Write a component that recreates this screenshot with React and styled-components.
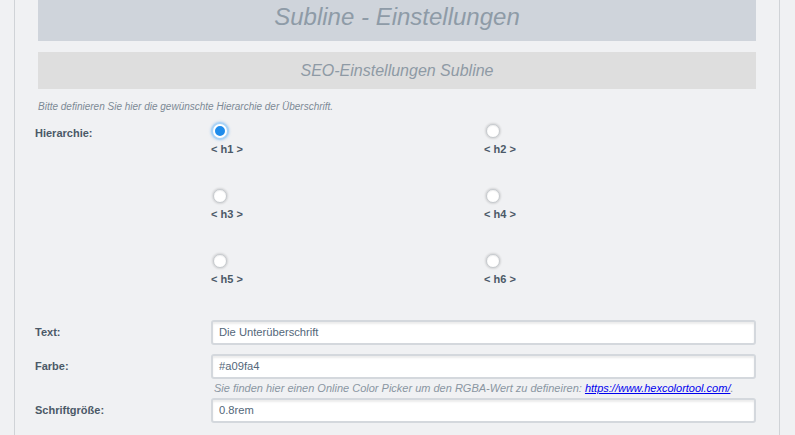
import React from 'react';
import styled, { createGlobalStyle } from 'styled-components';

const GlobalStyle = createGlobalStyle`
  html, body {
    margin: 0;
    padding: 0;
    background: #f0f1f3;
    font-family: "Liberation Sans", Arial, sans-serif;
  }
`;

const Page = styled.div`
  height: 435px;
  overflow: hidden;
`;

const Panel = styled.div`
  margin-left: 14px;
  width: 766px;
  min-height: 435px;
  border-left: 1px solid #d0d3d7;
  border-right: 1px solid #d0d3d7;
  padding: 0 23px;
  box-sizing: border-box;
`;

const TitleBar = styled.div`
  height: 41px;
  background: #cfd4db;
  text-align: center;
  font-size: 24px;
  font-style: italic;
  line-height: 33px;
  color: #8e9ba7;
`;

const SubBar = styled.div`
  margin-top: 11px;
  height: 37px;
  background: #dedede;
  text-align: center;
  font-size: 16px;
  font-style: italic;
  line-height: 37px;
  color: #8e9aa5;
`;

const Note = styled.div`
  margin-top: 12px;
  font-size: 10px;
  line-height: 12px;
  font-style: italic;
  color: #7c8995;
`;

const FormRow = styled.div`
  display: grid;
  grid-template-columns: 176px 1fr;
  align-items: ${p => (p.$top ? 'start' : 'center')};
  margin-left: -3px;
  margin-top: ${p => p.$mt || 0}px;
`;

const Label = styled.div`
  font-size: 11px;
  font-weight: bold;
  color: #4b5967;
  line-height: 13px;
  padding-top: ${p => p.$pt || 0}px;
`;

const RadioGrid = styled.div`
  display: grid;
  grid-template-columns: 273px 273px;
  grid-auto-rows: 65px;
`;

const RadioCell = styled.label`
  display: flex;
  flex-direction: column;
  align-items: flex-start;
  padding-top: 1px;
`;

const Radio = styled.span`
  display: block;
  width: 14px;
  height: 14px;
  margin-left: 2px;
  border-radius: 50%;
  box-sizing: border-box;
  background: ${p => (p.$checked ? '#1f8ceb' : '#fff')};
  border: ${p => (p.$checked ? '2px solid #fff' : '1px solid #c6cace')};
  box-shadow: ${p =>
    p.$checked
      ? '0 0 0 2px #a9d3f6, 0 0 2px 3px rgba(120,180,240,0.35)'
      : '0 0 2px 1px rgba(0,0,0,0.12), inset 0 1px 1px rgba(0,0,0,0.06)'};
`;

const RadioText = styled.span`
  margin-top: 5px;
  font-size: 11px;
  font-weight: bold;
  line-height: 13px;
  color: #4b5967;
`;

const Input = styled.div`
  height: 25px;
  box-sizing: border-box;
  border: 2px solid #d4d8dd;
  border-radius: 3px;
  background: #fff;
  box-shadow: inset 0 2px 2px rgba(0, 0, 0, 0.08);
  padding-left: 6px;
  font-size: 11.2px;
  line-height: 21px;
  color: #53677a;
`;

const Help = styled.div`
  margin-top: 3px;
  padding-left: 3px;
  font-size: 11px;
  line-height: 13px;
  font-style: italic;
  color: #8a96a2;

  a {
    color: #0000ee;
    text-decoration: underline;
  }
`;

const levels = ['h1', 'h2', 'h3', 'h4', 'h5', 'h6'];

export default function App() {
  return (
    <Page>
      <GlobalStyle />
      <Panel>
        <TitleBar>Subline - Einstellungen</TitleBar>
        <SubBar>SEO-Einstellungen Subline</SubBar>
        <Note>Bitte definieren Sie hier die gewünschte Hierarchie der Überschrift.</Note>

        <FormRow $top $mt={10}>
          <Label $pt={4}>Hierarchie:</Label>
          <RadioGrid>
            {levels.map(l => (
              <RadioCell key={l}>
                <Radio $checked={l === 'h1'} />
                <RadioText>&lt; {l} &gt;</RadioText>
              </RadioCell>
            ))}
          </RadioGrid>
        </FormRow>

        <FormRow $mt={2}>
          <Label>Text:</Label>
          <Input>Die Unterüberschrift</Input>
        </FormRow>

        <FormRow $mt={9}>
          <Label>Farbe:</Label>
          <Input>#a09fa4</Input>
        </FormRow>
        <FormRow>
          <span />
          <Help>
            Sie finden hier einen Online Color Picker um den RGBA-Wert zu defineiren:{' '}
            <a href="#">https://www.hexcolortool.com/</a>.
          </Help>
        </FormRow>

        <FormRow $mt={3}>
          <Label>Schriftgröße:</Label>
          <Input>0.8rem</Input>
        </FormRow>
      </Panel>
    </Page>
  );
}
